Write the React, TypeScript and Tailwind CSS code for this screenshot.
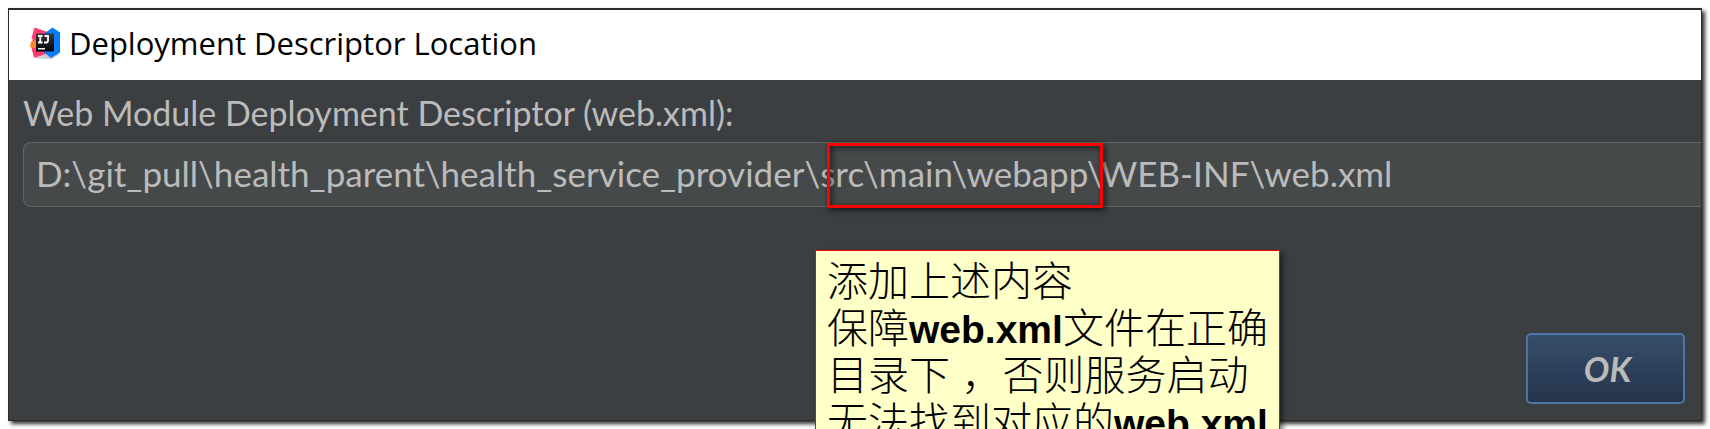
function IdeaLogo() {
  return (
    <svg viewBox="0 0 32 32" className="size-8 shrink-0" aria-hidden="true">
      <defs>
        <linearGradient id="tile" x1="0" y1="0" x2="0" y2="1">
          <stop offset="0" stopColor="#3a3a3a" />
          <stop offset="1" stopColor="#000" />
        </linearGradient>
      </defs>
      <path d="M6 31.500 18 27l13 0-8.500 5z" fill="#000" opacity=".2" />
      <path d="M5.500.500 20 5.500 14 18l6 8-14.500 5L2.500 20z" fill="#fe3d6e" />
      <path d="M5.500.500 2.500 11l4 3z" fill="#fe3d6e" />
      <path d="M2 14.500 8 13v11L1 19.500z" fill="#fd8a24" />
      <path d="M7 21 2.500 20.500 5 31z" fill="#fe3d6e" />
      <path d="M16 6 23.500.500 31 5.500V25.500L22 31l-7-5.500z" fill="#087cfa" />
      <rect x="7" y="6.500" width="18" height="18" fill="url(#tile)" />
      <path d="M9 9h4.500M11.250 9v6.500M9 15.500h4.500M15.500 9h3.500v4.500q0 2-2 2H15" fill="none" stroke="#fff" strokeWidth="1.800" />
      <path d="M9 21h7v1.500H9z" fill="#fff" />
    </svg>
  );
}

export default function App() {
  return (
    <main className="h-screen overflow-hidden bg-white p-2">
      <section
        aria-labelledby="dialog-title"
        className="relative flex h-full flex-col border-t-2 border-r border-b border-l border-[#2b2b2b] bg-[#3c3f41] shadow-[3px_3px_4px_#000000cc]"
      >
        <header className="flex h-[70px] shrink-0 items-center gap-2 bg-white px-5 pb-1">
          <IdeaLogo />
          <h1 id="dialog-title" className="font-['Open_Sans','Noto_Sans',sans-serif] text-[31px] leading-10 text-black">
            Deployment Descriptor Location
          </h1>
        </header>

        <form className="flex grow flex-col font-['Comic_Sans_MS','Lato',sans-serif] text-[#bbbbbb]">
          <div className="relative flex flex-col gap-2 pt-3 pl-[14px]">
            <label htmlFor="descriptor" className="text-[34px] leading-[42px]">
              Web Module Deployment Descriptor (web.xml):
            </label>
            <input
              id="descriptor"
              type="text"
              defaultValue="D:\git_pull\health_parent\health_service_provider\src\main\webapp\WEB-INF\web.xml"
              className="h-[65px] w-full rounded-l-lg border border-r-0 border-[#646464] bg-[#45494a] px-3 pb-1 text-[35px] outline-none"
            />
            <div className="pointer-events-none absolute top-[63px] left-[818px] h-[65px] w-[276px] border-3 border-[#ff0000] shadow-[2px_2px_6px_#000000b0,inset_2px_2px_6px_#00000090]" />
          </div>

          <div className="mt-auto flex justify-end px-4 pb-4">
            <button
              type="button"
              className="h-[71px] w-[159px] rounded-[5px] border-2 border-[#4a76a5] bg-linear-to-b from-[#374e69] to-[#25344c] pl-1 text-[34px] font-bold italic"
            >
              OK
            </button>
          </div>
        </form>

        <aside className="absolute top-[240px] left-[806px] w-[465px] border border-[#ff0000] bg-[#ffffc8] px-[11px] pt-2 pb-4 font-['Liberation_Sans','Noto_Sans_CJK_SC',sans-serif] text-[41px] leading-[47px] font-light whitespace-nowrap text-black shadow-[3px_3px_5px_#00000080]">
          <p>添加上述内容</p>
          <p>
            保障<b className="text-[39px] font-bold">web.xml</b>文件在正确
          </p>
          <p>目录下 ，否则服务启动</p>
          <p>
            无法找到对应的<b className="text-[39px] font-bold">web.xml</b>
          </p>
        </aside>
      </section>
    </main>
  );
}
